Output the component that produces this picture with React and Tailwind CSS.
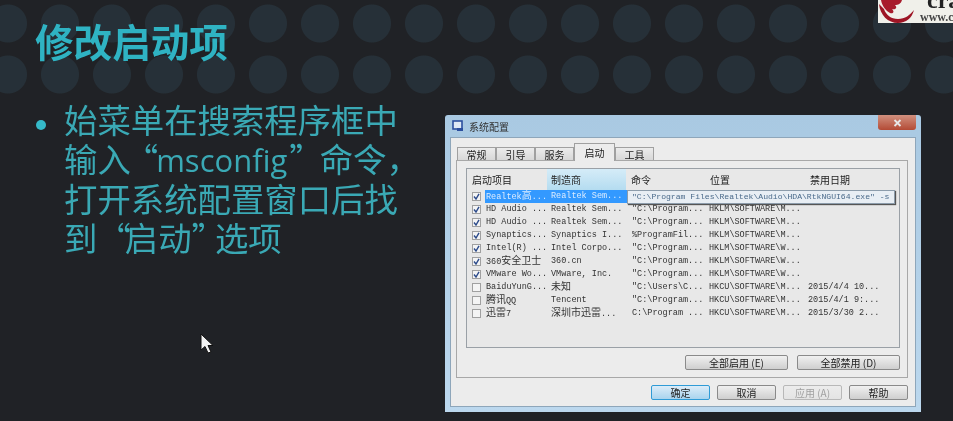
const Cn = ({ children }) => (
  <span className="font-['Noto_Sans_CJK_SC',sans-serif] text-[10px] leading-none">{children}</span>
);

const rows = [
  { on: true, selected: true, item: <>Realtek<Cn>高</Cn>...</>, maker: "Realtek Sem...", cmd: "", loc: "", date: "" },
  { on: true, item: "HD Audio ...", maker: "Realtek Sem...", cmd: '"C:\\Program...', loc: "HKLM\\SOFTWARE\\M...", date: "" },
  { on: true, item: "HD Audio ...", maker: "Realtek Sem...", cmd: '"C:\\Program...', loc: "HKLM\\SOFTWARE\\M...", date: "" },
  { on: true, item: "Synaptics...", maker: "Synaptics I...", cmd: "%ProgramFil...", loc: "HKLM\\SOFTWARE\\M...", date: "" },
  { on: true, item: "Intel(R) ...", maker: "Intel Corpo...", cmd: '"C:\\Program...', loc: "HKLM\\SOFTWARE\\W...", date: "" },
  { on: true, item: <>360<Cn>安全卫士</Cn></>, maker: "360.cn", cmd: '"C:\\Program...', loc: "HKLM\\SOFTWARE\\W...", date: "" },
  { on: true, item: "VMware Wo...", maker: "VMware, Inc.", cmd: '"C:\\Program...', loc: "HKLM\\SOFTWARE\\W...", date: "" },
  { on: false, item: "BaiduYunG...", maker: <Cn>未知</Cn>, cmd: '"C:\\Users\\C...', loc: "HKCU\\SOFTWARE\\M...", date: "2015/4/4 10..." },
  { on: false, item: <><Cn>腾讯</Cn>QQ</>, maker: "Tencent", cmd: '"C:\\Program...', loc: "HKCU\\SOFTWARE\\M...", date: "2015/4/1 9:..." },
  { on: false, item: <><Cn>迅雷</Cn>7</>, maker: <><Cn>深圳市迅雷</Cn>...</>, cmd: "C:\\Program ...", loc: "HKCU\\SOFTWARE\\M...", date: "2015/3/30 2..." },
];

const WinButton = ({ children, className = "" }) => (
  <div className={`h-[15px] flex items-center justify-center border rounded-[2px] bg-gradient-to-b text-[10px] ${className}`}>
    {children}
  </div>
);

const Tab = ({ children, active }) => (
  <div className={`flex items-center justify-center border border-b-0 border-[#a0a0a0] text-[10px] text-[#222] ${active ? "w-[41px] h-[18px] bg-[#ececec] z-10" : "w-[39px] h-[14px] bg-gradient-to-b from-[#ececec] to-[#d6d6d6]"}`}>
    {children}
  </div>
);

const SystemConfig = () => (
  <div className="w-[476px] h-[297px] bg-gradient-to-b from-[#a9c9e2] to-[#bcd8ee] rounded-t-[3px] px-[5px] pb-[5px] flex flex-col font-['Noto_Sans_CJK_SC',sans-serif] blur-[0.5px] shrink-0">
    <div className="h-[22px] flex items-center relative shrink-0">
      <svg width="12" height="12" viewBox="0 0 12 12" className="ml-[2px]">
        <rect x="1" y="1" width="9" height="8" fill="#dfe9f5" stroke="#2c4f9e" strokeWidth="1.6" />
        <rect x="5" y="8" width="6" height="3" fill="#2c4f9e" />
      </svg>
      <span className="ml-[5px] text-[10px] text-[#333]">系统配置</span>
      <div className="absolute right-0 top-0 w-[38px] h-[15px] rounded-b-[3px] bg-gradient-to-b from-[#d0907f] to-[#b34a35] flex items-center justify-center">
        <svg width="9" height="8" viewBox="0 0 9 8">
          <path d="M1.5 1 L7.5 7 M7.5 1 L1.5 7" stroke="#e8e8e8" strokeWidth="1.8" />
        </svg>
      </div>
    </div>
    <div className="flex-1 bg-[#ececec] border border-[#8ea6ba] px-[5px] pt-[5px] flex flex-col">
      <div className="flex items-end h-[18px] pl-px">
        <Tab>常规</Tab>
        <Tab>引导</Tab>
        <Tab>服务</Tab>
        <Tab active>启动</Tab>
        <Tab>工具</Tab>
      </div>
      <div className="w-[452px] h-[218px] -mt-px border border-[#a8a8a8] bg-[#ececec] pt-[7px] pl-[9px] pr-[7px]">
        <div className="h-[180px] w-[434px] border border-[#9aa0a6] bg-[#e8e8e8] relative">
          <div className="h-[21px] flex items-center text-[10px] text-[#222]">
            <div className="w-[80px] pl-[5px]">启动项目</div>
            <div className="w-[79px] h-full pl-[4px] flex items-center bg-gradient-to-b from-[#d5ecf8] to-[#b4dcf0]">制造商</div>
            <div className="w-[79px] pl-[5px]">命令</div>
            <div className="w-[100px] pl-[5px]">位置</div>
            <div className="pl-[5px]">禁用日期</div>
          </div>
          <div className="flex flex-col font-['Liberation_Mono',monospace] text-[8.5px] text-[#333]">
            {rows.map((row, i) => (
              <div key={i} className="h-[13px] flex items-center whitespace-nowrap">
                <div className="w-[18px] pl-[5px] shrink-0">
                  <div className="w-[9px] h-[9px] border border-[#a0a0a0] bg-[#f4f4f4] flex items-center justify-center">
                    {row.on && (
                      <svg width="7" height="7" viewBox="0 0 7 7">
                        <path d="M1 3.5 L3 6 L6 0.8" fill="none" stroke="#2c4a8a" strokeWidth="1.4" />
                      </svg>
                    )}
                  </div>
                </div>
                <div className={`w-[143px] shrink-0 h-full flex items-center pl-px ${row.selected ? "bg-[#3399ff] text-[#dcecff]" : ""}`}>
                  <span className="w-[65px] shrink-0">{row.item}</span>
                  <span>{row.maker}</span>
                </div>
                <div className="w-[79px] shrink-0 pl-[4px]">{row.cmd}</div>
                <div className="w-[100px] shrink-0 pl-[2px]">{row.loc}</div>
                <div className="pl-px">{row.date}</div>
              </div>
            ))}
          </div>
          <div className="absolute left-[160px] top-[21px] w-[268px] h-[14px] bg-[#e8eef4] border border-[#8c9cab] shadow-[1px_1px_1px_#555] flex items-center pl-[4px] font-['Liberation_Mono',monospace] text-[8.1px] text-[#4a6a8a] whitespace-nowrap">
            "C:\Program Files\Realtek\Audio\HDA\RtkNGUI64.exe" -s
          </div>
        </div>
        <div className="flex justify-end gap-[9px] mt-[7px]">
          <WinButton className="w-[103px] border-[#8a8a8a] from-[#f0f0f0] to-[#cfcfcf] text-[#222]">全部启用 (E)</WinButton>
          <WinButton className="w-[103px] border-[#8a8a8a] from-[#f0f0f0] to-[#cfcfcf] text-[#222]">全部禁用 (D)</WinButton>
        </div>
      </div>
      <div className="flex justify-end gap-[7px] mt-[7px] pr-[2px]">
        <WinButton className="w-[59px] border-[#2f9bd6] from-[#dcecf8] to-[#a9d4ee] text-[#222]">确定</WinButton>
        <WinButton className="w-[59px] border-[#8a8a8a] from-[#f0f0f0] to-[#cfcfcf] text-[#222]">取消</WinButton>
        <WinButton className="w-[59px] border-[#b8b8b8] from-[#ececec] to-[#e4e4e4] text-[#a0a0a0]">应用 (A)</WinButton>
        <WinButton className="w-[59px] border-[#8a8a8a] from-[#f0f0f0] to-[#cfcfcf] text-[#222]">帮助</WinButton>
      </div>
    </div>
  </div>
);

const App = () => {
  return (
    <div className="w-[953px] h-[421px] overflow-hidden relative bg-[#202226] font-['Noto_Sans_CJK_SC',sans-serif]">
      <div className="h-[97px] pt-[16px] pl-[35px] bg-[radial-gradient(circle_at_center,#263038_18.5px,transparent_19.5px)] bg-[length:52px_51px] bg-[position:-18px_-2px]">
        <h1 className="text-[38.6px] leading-[48px] font-bold text-[#2fb3c3] blur-[0.3px]">修改启动项</h1>
      </div>
      <div className="flex pl-[36px]">
        <div className="flex w-[409px] shrink-0 pt-[3px]">
          <div className="w-[10px] h-[10px] mt-[20px] rounded-full bg-[#35b9c8] shrink-0" />
          <p className="ml-[18px] text-[33.4px] leading-[38.6px] text-[#3aa9b5] whitespace-nowrap blur-[0.3px]">
            始菜单在搜索程序框中
            <br />
            输入<span className="-ml-[6px] -mr-[2px]">“</span>
            <span className="font-['Open_Sans',sans-serif] text-[31px]">msconfig</span>
            <span className="ml-[2px] -mr-[3px]">”</span>命令，
            <br />
            打开系统配置窗口后找
            <br />
            到<span className="-mr-[6px]">“</span>启动<span className="-mr-[10px]">”</span>选项
          </p>
        </div>
        <div className="pt-[18px]">
          <SystemConfig />
        </div>
      </div>
      <div className="absolute right-0 top-0 w-[75px] h-[23px] bg-[#f0f0ea] overflow-hidden blur-[0.3px]">
        <svg width="37" height="23" viewBox="0 0 37 23" className="absolute left-0 top-0">
          <path d="M1 4 C2 15 10 23 20 23 C28 23 34 18 36 10 C32 15 27 19 20 19 C13 19 8 15 6 9 Z" fill="#9d1525" />
          <path d="M3 0 L24 0 C23 4 20 5 17 5 C20 8 17 10 14 9 C17 12 15 14 12 13 C8 11 4 6 3 0 Z" fill="#a81c2c" />
        </svg>
        <span className="absolute left-[49px] -top-[14px] font-['Liberation_Serif',serif] font-bold text-[24px] leading-[28px] text-[#222]">cra</span>
        <span className="absolute left-[42px] top-[12px] font-['Liberation_Serif',serif] font-bold text-[12px] leading-[10px] text-[#444] whitespace-nowrap">www.c</span>
      </div>
      <svg width="16" height="23" viewBox="0 0 16 23" className="absolute left-[200px] top-[333px] blur-[0.3px]">
        <path d="M1 1 L1 17 L5 13.5 L8 20 L11 19 L8 12.5 L13 12.5 Z" fill="#f2f2f2" stroke="#111" strokeWidth="1" />
      </svg>
    </div>
  );
};

export default App;
